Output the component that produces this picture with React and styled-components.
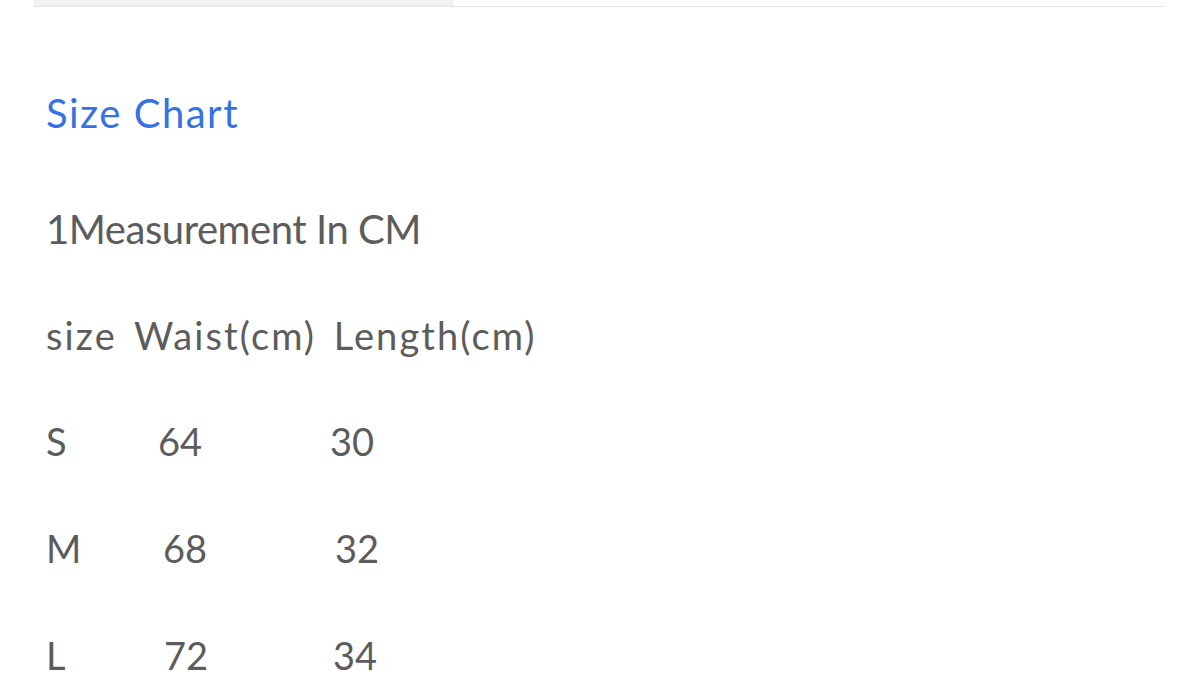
import React from 'react';
import styled, { createGlobalStyle } from 'styled-components';

const GlobalStyle = createGlobalStyle`
  html, body {
    margin: 0;
    padding: 0;
    background: #fff;
  }
  body {
    font-family: Lato, "Open Sans", sans-serif;
  }
`;

const Page = styled.div`
  width: 1200px;
  height: 694px;
  overflow: hidden;
  background: #fff;
`;

const TabBar = styled.div`
  margin: 0 34px;
  display: flex;
  border-bottom: 1px solid #e6e6e6;
`;

const Tab = styled.div`
  width: ${(p) => p.$w}px;
  height: 5px;
  background: ${(p) => (p.$active ? '#f2f2f2' : 'transparent')};
  border-bottom: 1px solid ${(p) => (p.$active ? '#ececec' : 'transparent')};
`;

const Content = styled.div`
  padding: 53px 0 0 46px;
`;

const Title = styled.h2`
  margin: 0 0 10px;
  font-size: 40px;
  font-weight: 400;
  line-height: 106px;
  letter-spacing: 1.5px;
  color: #3572e3;
`;

const Line = styled.p`
  margin: 0;
  font-size: ${(p) => p.$size || 38}px;
  line-height: 106px;
  letter-spacing: ${(p) => p.$ls || 0}px;
  word-spacing: ${(p) => p.$ws || 0}px;
  color: #5c5c5c;
  white-space: nowrap;
`;

const Row = styled.div`
  display: flex;
  font-size: 38px;
  line-height: 107px;
  color: #5c5c5c;
`;

const Cell = styled.span`
  width: ${(p) => p.$w}px;
  padding-left: ${(p) => p.$pad || 0}px;
  box-sizing: border-box;
`;

const rows = [
  { size: 'S', waist: '64', length: '30', wPad: 0, lPad: 0 },
  { size: 'M', waist: '68', length: '32', wPad: 5, lPad: 5 },
  { size: 'L', waist: '72', length: '34', wPad: 6, lPad: 3 },
];

const App = () => (
  <Page>
    <GlobalStyle />
    <TabBar>
      <Tab $w={420} $active />
      <Tab $w={712} />
    </TabBar>
    <Content>
      <Title>Size Chart</Title>
      <Line $size={40} $ls={-0.45}>1Measurement In CM</Line>
      <Line $ls={2.1} $ws={-3}>size&nbsp; Waist(cm)&nbsp; Length(cm)</Line>
      {rows.map((r) => (
        <Row key={r.size}>
          <Cell $w={112}>{r.size}</Cell>
          <Cell $w={172} $pad={r.wPad}>{r.waist}</Cell>
          <Cell $w={120} $pad={r.lPad}>{r.length}</Cell>
        </Row>
      ))}
    </Content>
  </Page>
);

export default App;
